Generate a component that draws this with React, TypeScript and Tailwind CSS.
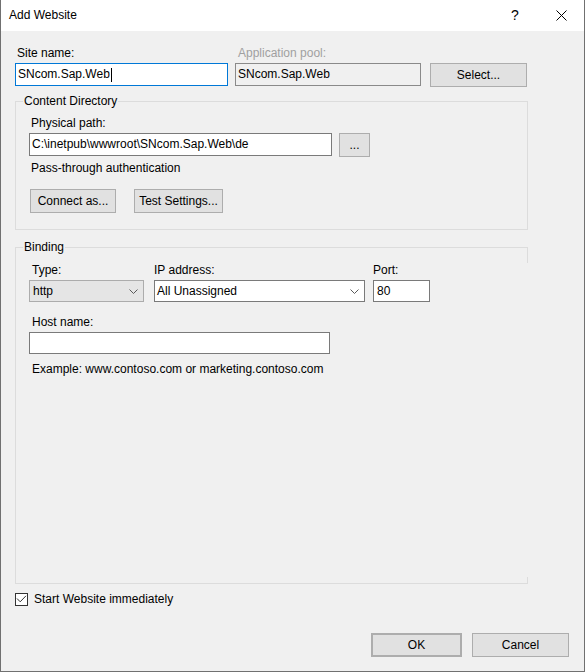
import React from "react";

function Chevron() {
  return (
    <svg width="9" height="5" viewBox="0 0 9 5" className="shrink-0">
      <path d="M0.5 0.5 L4.5 4.5 L8.5 0.5" fill="none" stroke="#5a5a5a" strokeWidth="1" />
    </svg>
  );
}

function Btn({ children, className = "" }: { children: React.ReactNode; className?: string }) {
  return (
    <div
      className={
        "h-[24px] bg-[#e1e1e1] border border-[#adadad] flex items-center justify-center shrink-0 " +
        className
      }
    >
      {children}
    </div>
  );
}

export default function App() {
  return (
    <div className="w-[585px] h-[672px] bg-[#f0f0f0] border-l border-r border-b border-[#707070] flex flex-col text-[12px] leading-[15px] text-black font-['Liberation_Sans',Arial,sans-serif] overflow-hidden">
      {/* Title bar */}
      <div className="h-[31px] bg-white flex items-center shrink-0">
        <span className="pl-[8px]">Add Website</span>
        <div className="ml-auto flex">
          <div className="w-[46px] h-[31px] flex items-center justify-center text-[14px]">?</div>
          <div className="w-[46px] h-[31px] flex items-center justify-center">
            <svg width="11" height="11" viewBox="0 0 11 11">
              <path d="M0.5 0.5 L10.5 10.5 M10.5 0.5 L0.5 10.5" stroke="#000" strokeWidth="1" fill="none" />
            </svg>
          </div>
        </div>
      </div>

      {/* Body */}
      <div className="flex-1 flex flex-col pl-[14px] pr-[15px] pt-[15px]">
        {/* Row 1 */}
        <div className="flex items-start">
          <div className="w-[213px] flex flex-col">
            <span className="pl-[2px]">Site name:</span>
            <div className="mt-[2px] h-[23px] bg-white border border-[#0078d7] flex items-center pl-[2px]">
              <span>SNcom.Sap.Web</span>
              <span className="inline-block w-px h-[14px] bg-black ml-[1px]" />
            </div>
          </div>
          <div className="ml-[7px] w-[186px] flex flex-col">
            <span className="pl-[3px] text-[#a0a0a0]">Application pool:</span>
            <div className="mt-[2px] h-[23px] bg-[#f0f0f0] border border-[#8a8a8a] flex items-center pl-[2px]">
              SNcom.Sap.Web
            </div>
          </div>
          <div className="ml-[9px] pt-[17px]">
            <Btn className="w-[97px]">Select...</Btn>
          </div>
        </div>

        {/* Content Directory */}
        <div className="mt-[14px] w-[513px] h-[129px] border border-[#dcdcdc] relative pl-[13px] pt-[14px] flex flex-col">
          <span className="absolute left-[7px] top-[-8px] px-[1px] bg-[#f0f0f0]">Content Directory</span>
          <span className="pl-[2px]">Physical path:</span>
          <div className="mt-[2px] flex items-start">
            <div className="w-[303px] h-[23px] bg-white border border-[#7a7a7a] flex items-center pl-[2px]">
              C:\inetpub\wwwroot\SNcom.Sap.Web\de
            </div>
            <Btn className="ml-[7px] w-[31px]">...</Btn>
          </div>
          <span className="mt-[4px] pl-[2px]">Pass-through authentication</span>
          <div className="mt-[13px] flex">
            <Btn className="ml-[1px] w-[86px]">Connect as...</Btn>
            <Btn className="ml-[18px] w-[89px]">Test Settings...</Btn>
          </div>
        </div>

        {/* Binding */}
        <div className="mt-[17px] w-[513px] h-[337px] border-l border-t border-b border-[#dcdcdc] relative pl-[13px] pt-[15px] flex flex-col">
          <span className="absolute left-[7px] top-[-8px] px-[1px] bg-[#f0f0f0]">Binding</span>
          <span className="absolute right-0 top-0 w-px h-[15px] bg-[#dcdcdc]" />
          <span className="absolute right-0 bottom-0 w-px h-[6px] bg-[#dcdcdc]" />
          <div className="flex items-start">
            <div className="w-[115px] flex flex-col">
              <span className="pl-[3px]">Type:</span>
              <div className="mt-[2px] h-[22px] bg-[#e5e5e5] border border-[#acacac] flex items-center pl-[3px] pr-[5px]">
                <span className="flex-1">http</span>
                <Chevron />
              </div>
            </div>
            <div className="ml-[10px] w-[211px] flex flex-col">
              <span>IP address:</span>
              <div className="mt-[2px] h-[22px] bg-white border border-[#7a7a7a] flex items-center pl-[2px] pr-[5px]">
                <span className="flex-1">All Unassigned</span>
                <Chevron />
              </div>
            </div>
            <div className="ml-[8px] w-[57px] flex flex-col">
              <span>Port:</span>
              <div className="mt-[2px] h-[22px] bg-white border border-[#7a7a7a] flex items-center pl-[3px]">
                80
              </div>
            </div>
          </div>
          <span className="mt-[13px] pl-[3px]">Host name:</span>
          <div className="mt-[2px] w-[301px] h-[22px] bg-white border border-[#7a7a7a]" />
          <span className="mt-[8px] pl-[3px]">Example: www.contoso.com or marketing.contoso.com</span>
        </div>

        {/* Checkbox */}
        <div className="mt-[8px] flex items-center">
          <div className="w-[13px] h-[13px] border border-[#333333] bg-white flex items-center justify-center">
            <svg width="11" height="11" viewBox="0 0 11 11">
              <path d="M1 4.5 L4.2 7.8 L10 1.8" fill="none" stroke="#333333" strokeWidth="1" />
            </svg>
          </div>
          <span className="ml-[6px]">Start Website immediately</span>
        </div>

        {/* Buttons */}
        <div className="mt-[26px] flex justify-end">
          <Btn className="w-[91px] border-2 border-[#0078d7]">OK</Btn>
          <Btn className="ml-[10px] w-[97px]">Cancel</Btn>
        </div>
      </div>
    </div>
  );
}
